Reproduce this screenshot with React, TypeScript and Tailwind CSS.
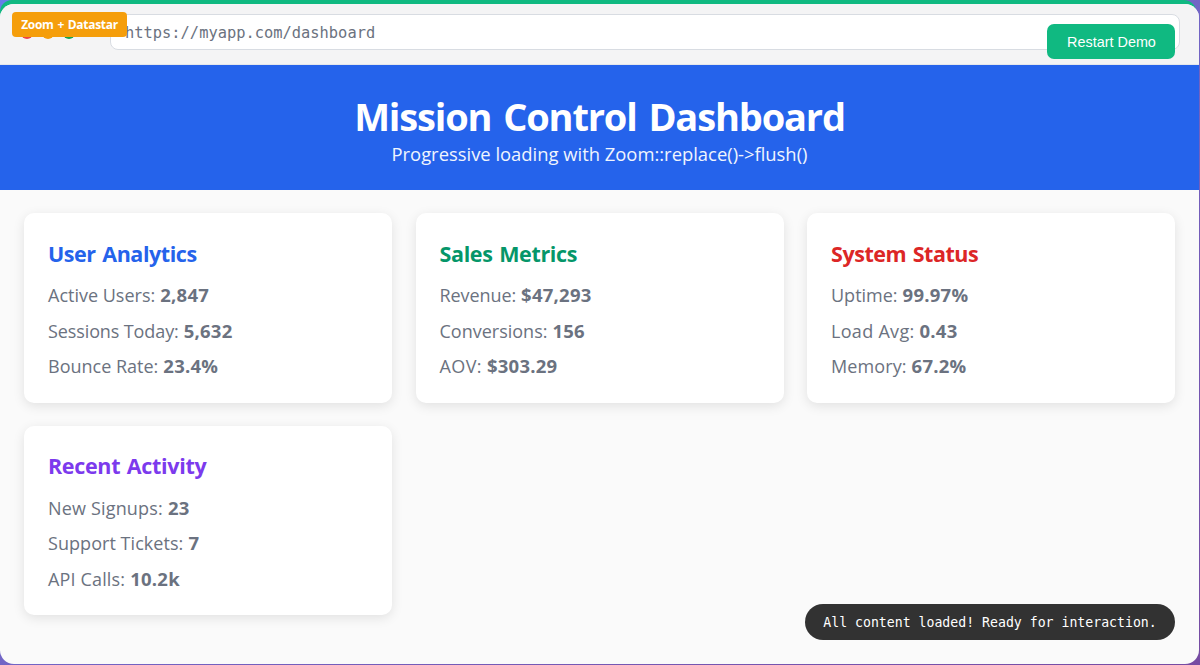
import React from 'react';

interface Metric {
  label: string;
  value: string;
  labelClass?: string;
}

interface MetricCardProps {
  title: string;
  titleClass: string;
  metrics: Metric[];
}

const cards: MetricCardProps[] = [
  {
    title: 'User Analytics',
    titleClass: 'text-[#2563eb] tracking-[-0.43px]',
    metrics: [
      { label: 'Active Users:', value: '2,847' },
      { label: 'Sessions Today:', value: '5,632', labelClass: 'tracking-[-0.11px]' },
      { label: 'Bounce Rate:', value: '23.4%' },
    ],
  },
  {
    title: 'Sales Metrics',
    titleClass: 'text-[#059669] tracking-[-0.35px]',
    metrics: [
      { label: 'Revenue:', value: '$47,293', labelClass: 'tracking-[-0.08px]' },
      { label: 'Conversions:', value: '156' },
      { label: 'AOV:', value: '$303.29', labelClass: 'tracking-[0.4px]' },
    ],
  },
  {
    title: 'System Status',
    titleClass: 'text-[#dc2626] tracking-[-0.46px]',
    metrics: [
      { label: 'Uptime:', value: '99.97%' },
      { label: 'Load Avg:', value: '0.43', labelClass: 'tracking-[0.3px]' },
      { label: 'Memory:', value: '67.2%', labelClass: 'tracking-[0.1px]' },
    ],
  },
  {
    title: 'Recent Activity',
    titleClass: 'text-[#7c3aed] tracking-[-0.32px]',
    metrics: [
      { label: 'New Signups:', value: '23', labelClass: 'tracking-[0.17px]' },
      { label: 'Support Tickets:', value: '7', labelClass: 'tracking-[0.05px]' },
      { label: 'API Calls:', value: '10.2k', labelClass: 'tracking-[0.15px]' },
    ],
  },
];

const MetricCard: React.FC<MetricCardProps> = ({ title, titleClass, metrics }) => (
  <div className="h-[189.5px] rounded-[10px] bg-white px-6 pt-[25.5px] shadow-[0_3px_12px_rgba(0,0,0,0.1)]">
    <h3 className={`text-[21.5px] leading-[30px] font-bold [word-spacing:1.4px] whitespace-nowrap ${titleClass}`}>{title}</h3>
    <div className="mt-[8.5px]">
      {metrics.map((m) => (
        <p key={m.label} className="flex h-[35.5px] items-baseline gap-[5px] text-[18px] leading-[35.5px] whitespace-nowrap text-[#6b7280]">
          <span className={m.labelClass}>{m.label}</span>
          <strong className="text-[18.5px] font-bold tracking-[0.25px]">{m.value}</strong>
        </p>
      ))}
    </div>
  </div>
);

const BrowserBar: React.FC = () => (
  <div className="flex h-[61px] items-start border-b border-[#e5e7eb] bg-[#f4f4f5] pt-[10px] pr-[19px] pl-[21px]">
    <div className="flex gap-[9px] pt-[13px]">
      <span className="h-3 w-3 rounded-full bg-[#ef4444]" />
      <span className="h-3 w-3 rounded-full bg-[#f59e0b]" />
      <span className="h-3 w-3 rounded-full bg-[#16a34a]" />
    </div>
    <div className="ml-[35px] flex h-9 flex-1 items-center rounded-lg border border-[#d8dce2] bg-white pt-[3px] pl-[14px] font-['DejaVu_Sans_Mono',monospace] text-[15.4px] text-[#6b7280]">
      https://myapp.com/dashboard
    </div>
  </div>
);

const App: React.FC = () => {
  return (
    <div className="relative h-[665px] w-[1200px] overflow-hidden bg-linear-to-br from-[#667eea] to-[#764ba2] pr-px font-['Open_Sans','Noto_Sans',sans-serif]">
      <div className="absolute top-0 left-0 h-7 w-[1196px] rounded-tl-[12px] rounded-tr-[12px] bg-[#10b981]" />
      <div className="relative mt-1 h-[660px] overflow-hidden rounded-[14px] bg-[#fafafa]">
        <BrowserBar />
        <header className="flex h-[124.5px] flex-col items-center bg-[#2563eb] pt-[28px] text-white">
          <h1 className="text-[38px] leading-[46px] font-bold tracking-[-1.15px] [word-spacing:3px] whitespace-nowrap">
            Mission Control Dashboard
          </h1>
          <p className="mt-px text-[18.4px] leading-[28px] whitespace-nowrap text-[#f0f5fe]">
            Progressive loading with Zoom::replace()-&gt;flush()
          </p>
        </header>
        <main className="grid grid-cols-3 gap-x-[23.5px] gap-y-[23px] px-6 pt-[23.8px]">
          {cards.map((card) => (
            <MetricCard key={card.title} {...card} />
          ))}
        </main>
      </div>

      <div className="absolute top-[12px] left-[12px] flex h-[25px] w-[115px] items-center justify-center rounded bg-[#f59e0b] pt-px text-[12px] font-bold tracking-[-0.3px] [word-spacing:1px] whitespace-nowrap text-white">
        Zoom + Datastar
      </div>
      <button className="absolute top-[24px] right-[25px] h-[35px] w-[128px] rounded-[7px] bg-[#10b981] pt-[2px] pl-px font-['Liberation_Sans',Arial,sans-serif] text-[14.4px] whitespace-nowrap text-white">
        Restart Demo
      </button>
      <div className="absolute right-[25px] bottom-[25px] flex h-9 w-[370px] items-center justify-center rounded-full bg-[#323232] pt-px font-['DejaVu_Sans_Mono',monospace] text-[13.2px] whitespace-nowrap text-white">
        All content loaded! Ready for interaction.
      </div>
    </div>
  );
};

export default App;
